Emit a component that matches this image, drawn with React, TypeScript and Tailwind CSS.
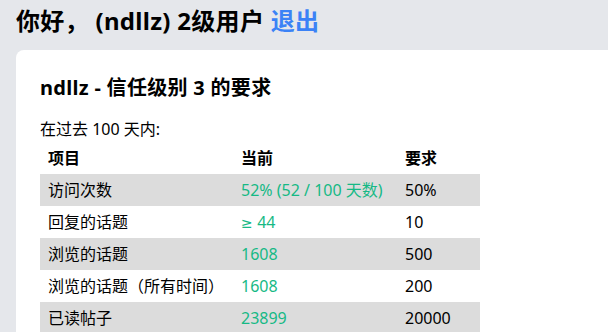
import React from "react";

const rows = [
  { k: "访问次数", v: "52% (52 / 100 天数)", r: "50%", shade: true },
  { k: "回复的话题", v: "44", ge: true, r: "10", shade: false },
  { k: "浏览的话题", v: "1608", r: "500", shade: true },
  { k: "浏览的话题（所有时间）", v: "1608", r: "200", shade: false },
  { k: "已读帖子", v: "23899", r: "20000", shade: true },
];

export default function App() {
  return (
    <div
      className="w-[608px] h-[332px] overflow-hidden bg-[#e5e7eb] text-black"
      style={{ fontFamily: '"Segoe UI", "Noto Sans", "Noto Sans CJK SC", sans-serif' }}
    >
      <div className="pl-4 pt-[5px] h-[50px]">
        <h1 className="text-[24px] font-bold leading-[32px] tracking-[0.3px]">
          你好， (ndllz) 2级用户 <span className="text-[#3b82f6]">退出</span>
        </h1>
      </div>
      <div className="ml-4 w-[640px] bg-white rounded-lg pl-6 pt-[24px] pb-6">
        <h2 className="text-[20px] font-bold leading-[28px] tracking-[0.3px]">ndllz - 信任级别 3 的要求</h2>
        <p className="mt-[15px] text-[16px] leading-[24px]">在过去 100 天内:</p>
        <table className="mt-[1px] w-[440px] text-[16px] border-collapse">
          <thead>
            <tr className="h-[32px]">
              <th className="w-[193px] text-left font-bold px-2">项目</th>
              <th className="w-[164px] text-left font-bold px-2">当前</th>
              <th className="text-left font-bold px-2">要求</th>
            </tr>
          </thead>
          <tbody>
            {rows.map((row) => (
              <tr key={row.k} className={row.shade ? "h-[32px] bg-[#dcdcdc]" : "h-[32px]"}>
                <td className="px-2">{row.k}</td>
                <td className="px-2 text-[#16b985]">
                  {row.ge ? (
                    <span className="text-[14px] font-['DejaVu_Sans']">≥ </span>
                  ) : null}
                  {row.v}
                </td>
                <td className="px-2">{row.r}</td>
              </tr>
            ))}
          </tbody>
        </table>
      </div>
    </div>
  );
}
